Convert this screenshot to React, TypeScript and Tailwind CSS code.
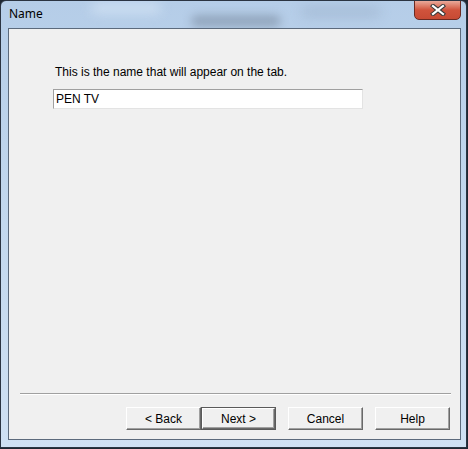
export default function App() {
  return (
    <div className="w-[468px] h-[449px] bg-[#1e2733]">
      {/* Window frame */}
      <div className="relative overflow-hidden w-[467px] h-[448px] rounded-t-[6px] border border-[#2b3442] bg-gradient-to-b from-[#b5cde8] via-[#c3d8ee] to-[#cfe0f3] flex flex-col">
        {/* Glass blur spots */}
        <div className="absolute top-[14px] left-[190px] w-[90px] h-[12px] rounded-full bg-[#6f7f93] opacity-50 blur-[5px]" />
        <div className="absolute top-[6px] left-[300px] w-[80px] h-[10px] rounded-full bg-[#8fa4bd] opacity-40 blur-[6px]" />
        <div className="absolute top-[2px] left-[90px] w-[70px] h-[10px] rounded-full bg-[#dbe9f7] opacity-70 blur-[6px]" />

        {/* Title bar */}
        <div className="relative h-[27px] flex items-center pl-[8px] pb-[2px]">
          <span className="text-[12px] text-black" style={{ fontFamily: '"Noto Sans", "Open Sans", sans-serif' }}>
            Name
          </span>
        </div>

        {/* Close button */}
        <div className="absolute top-[-1px] right-[5px] w-[47px] h-[20px] rounded-b-[5px] border border-[#6b2a22] bg-gradient-to-b from-[#e9a99a] via-[#d0533c] to-[#c74a34] flex items-center justify-center">
          <svg width="16" height="12" viewBox="0 0 16 12">
            <path d="M3 2 L13 10 M13 2 L3 10" stroke="#3a3a3a" strokeWidth="4.2" strokeLinecap="square" />
            <path d="M3 2 L13 10 M13 2 L3 10" stroke="#ffffff" strokeWidth="2.2" strokeLinecap="square" />
          </svg>
        </div>

        {/* Content panel */}
        <div
          className="relative ml-[7px] mr-[5px] mb-[7px] flex-1 flex flex-col border border-[#5c6a7c] bg-[#f0f0f0] text-[12px] text-black"
          style={{ fontFamily: '"Liberation Sans", Arial, sans-serif' }}
        >
          <div className="pl-[46px] mt-[36px] leading-[14px]">This is the name that will appear on the tab.</div>

          <div className="ml-[44px] mt-[10px] w-[310px] h-[20px] bg-white border-t border-l border-[#a0a0a0] border-r border-b border-r-[#e3e3e3] border-b-[#e3e3e3] flex items-center pl-[2px] leading-[14px]">
            PEN TV
          </div>

          <div className="flex-1" />

          <div className="ml-[11px] w-[431px] h-[2px] border-t border-[#a0a0a0] border-b border-b-white" />

          <div className="flex justify-end pr-[10px] mt-[12px] mb-[9px]">
            <div className="flex">
              <Btn label="< Back" />
              <Btn label="Next >" def />
            </div>
            <div className="ml-[12px]">
              <Btn label="Cancel" />
            </div>
            <div className="ml-[12px]">
              <Btn label="Help" />
            </div>
          </div>
        </div>
      </div>
    </div>
  );
}

function Btn({ label, def }: { label: string; def?: boolean }) {
  return (
    <div className={def ? 'w-[75px] h-[23px] border border-[#5a5a5a]' : 'w-[75px] h-[23px]'}>
      <div className="w-full h-full border-t border-l border-white border-r border-b border-r-[#696969] border-b-[#696969] bg-[#f0f0f0] shadow-[inset_-1px_-1px_0_#a0a0a0] flex items-center justify-center leading-[14px]">
        {label}
      </div>
    </div>
  );
}
